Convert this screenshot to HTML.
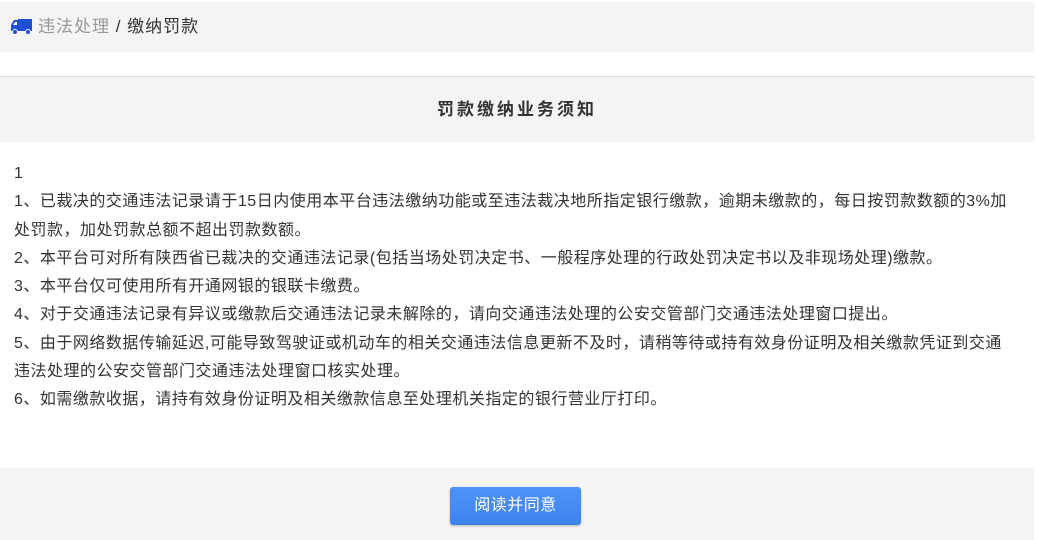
<!DOCTYPE html>
<html><head><meta charset="utf-8"><style>
body{margin:0;width:1037px;height:540px;background:#fff;font-family:"Liberation Sans","Microsoft YaHei","Noto Sans CJK SC",sans-serif;color:#333;overflow:hidden;position:relative}
.top{position:absolute;left:0;top:2px;width:1034px;height:50px;background:#f4f4f4}
.crumb{position:absolute;left:10px;top:16px;font-size:17px;line-height:22px;white-space:nowrap;letter-spacing:1px}
.crumb .a{color:#999}
.hd{position:absolute;left:0;top:76px;width:1034px;height:65px;background:#f4f4f4;border-top:1px solid #ddd;text-align:center;font-size:17px;font-weight:bold;line-height:66px;color:#333;letter-spacing:3px}
.ct{position:absolute;left:14px;top:160px;font-size:16px;line-height:28.3px;white-space:nowrap;color:#333;letter-spacing:0.5px}
.ft{position:absolute;left:0;top:468px;width:1034px;height:72px;background:#f4f4f4}
.btn{position:absolute;left:450px;top:487px;width:131px;height:38px;background:linear-gradient(#4e93f7,#3f82ee);border-radius:3px;box-shadow:0 1px 2px rgba(0,0,0,.25);color:#fff;font-size:16px;line-height:38px;text-align:center;letter-spacing:0.5px}
</style></head><body>
<div class="top"></div>
<div class="crumb"><svg width="24" height="18" viewBox="0 0 24 18" style="vertical-align:-3px;margin-right:4px"><path d="M8 2h14v11H8z" fill="#1f4fd1"/><path d="M1 8l3-5h5v10H1z" fill="#1f4fd1"/><rect x="1" y="11" width="21" height="3" fill="#1f4fd1"/><circle cx="5" cy="15" r="2.5" fill="#1f4fd1" stroke="#f4f4f4" stroke-width="1"/><circle cx="18" cy="15" r="2.5" fill="#1f4fd1" stroke="#f4f4f4" stroke-width="1"/><path d="M3 8l2-3h2v3z" fill="#f4f4f4"/></svg><span class="a">违法处理</span> / 缴纳罚款</div>
<div class="hd">罚款缴纳业务须知</div>
<div class="ct">1<br>1、已裁决的交通违法记录请于15日内使用本平台违法缴纳功能或至违法裁决地所指定银行缴款，逾期未缴款的，每日按罚款数额的3%加<br>处罚款，加处罚款总额不超出罚款数额。<br>2、本平台可对所有陕西省已裁决的交通违法记录(包括当场处罚决定书、一般程序处理的行政处罚决定书以及非现场处理)缴款。<br>3、本平台仅可使用所有开通网银的银联卡缴费。<br>4、对于交通违法记录有异议或缴款后交通违法记录未解除的，请向交通违法处理的公安交管部门交通违法处理窗口提出。<br>5、由于网络数据传输延迟,可能导致驾驶证或机动车的相关交通违法信息更新不及时，请稍等待或持有效身份证明及相关缴款凭证到交通<br>违法处理的公安交管部门交通违法处理窗口核实处理。<br>6、如需缴款收据，请持有效身份证明及相关缴款信息至处理机关指定的银行营业厅打印。</div>
<div class="ft"></div>
<div class="btn">阅读并同意</div>
</body></html>
